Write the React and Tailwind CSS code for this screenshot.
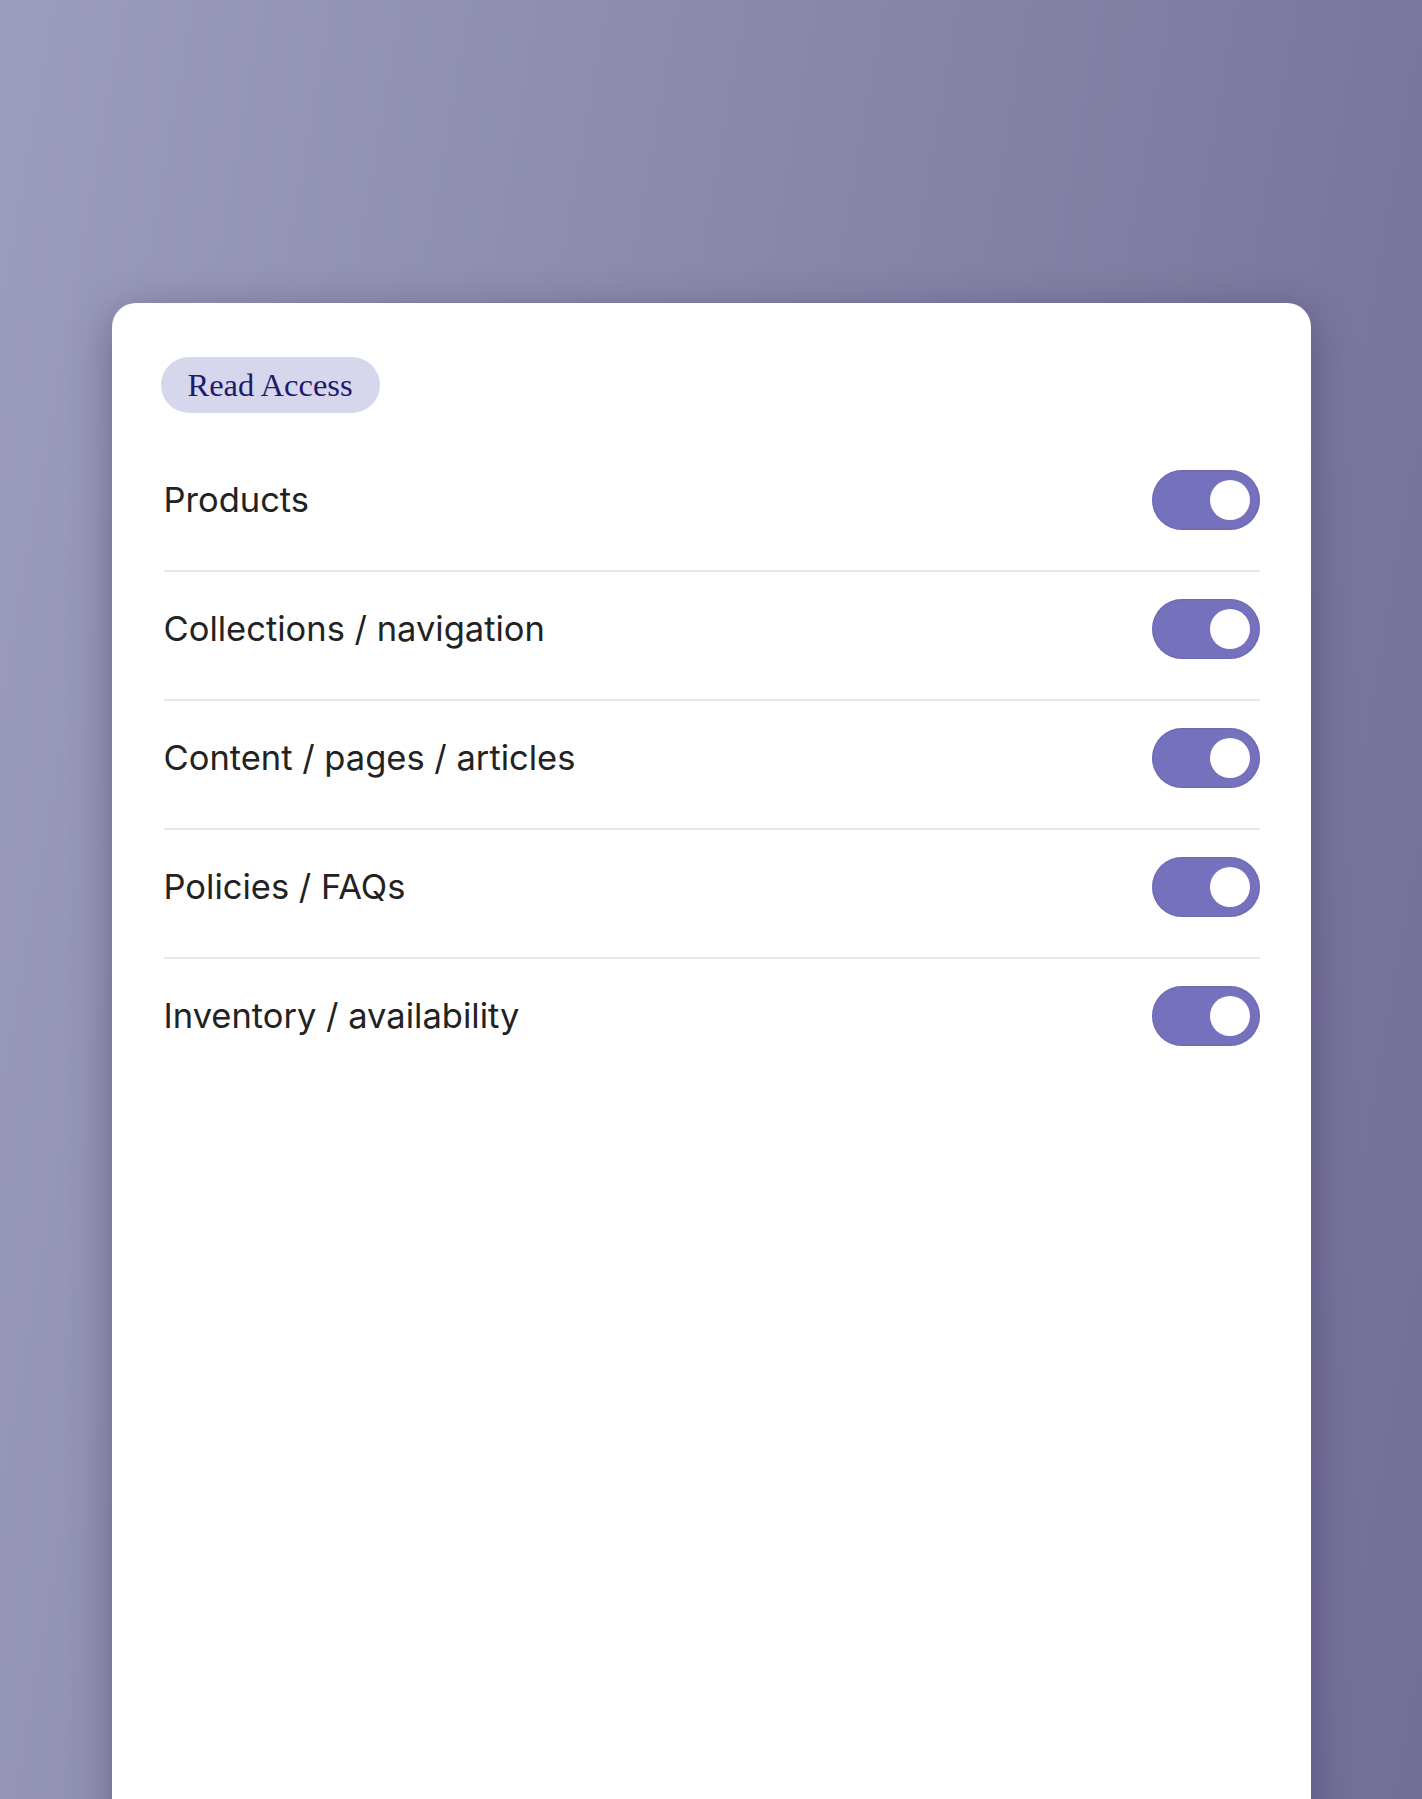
const items = [
  "Products",
  "Collections / navigation",
  "Content / pages / articles",
  "Policies / FAQs",
  "Inventory / availability",
];

function Toggle() {
  return (
    <div className="flex h-[60px] w-[108px] shrink-0 items-center justify-end rounded-full bg-[#7571bd] pr-[10px] shadow-[inset_0_0_2px_rgba(60,50,130,0.45)]">
      <div className="h-[40px] w-[40px] rounded-full bg-white" />
    </div>
  );
}

export default function App() {
  return (
    <div className="h-[1799px] overflow-hidden bg-[linear-gradient(100deg,#9c9cbc_0%,#8786a8_50%,#726e96_100%)] pt-[303px] font-['Inter',sans-serif]">
      <div className="mx-auto min-h-[1560px] w-[1199px] rounded-t-[24px] bg-white pl-[52px] pr-[51px] pt-[54px] shadow-[0_10px_40px_rgba(50,40,90,0.45)]">
        <div className="-ml-[3px] inline-flex h-[56px] items-center rounded-full bg-[#d6d6ec] px-[27px] font-['Liberation_Serif',serif] text-[32.5px] text-[#1f1b6c]">
          Read Access
        </div>
        <div className="mt-[30px]">
          {items.map((label, i) => (
            <div
              key={label}
              className={
                "flex items-center justify-between pt-[27px] pb-[40px] " +
                (i < items.length - 1 ? "border-b-2 border-[#e8e8e8]" : "")
              }
            >
              <span className="text-[34.5px] leading-none text-[#222222]">{label}</span>
              <Toggle />
            </div>
          ))}
        </div>
      </div>
    </div>
  );
}
